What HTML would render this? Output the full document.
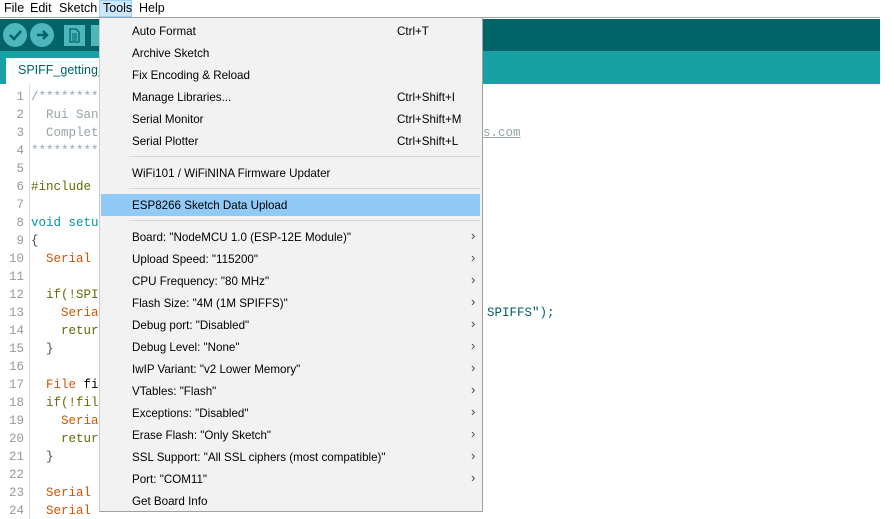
<!DOCTYPE html>
<html><head><style>
body{margin:0;width:894px;height:519px;background:#fff;position:relative;overflow:hidden;font-family:"Liberation Sans",sans-serif;}
.a{position:absolute;}
.mb{font-size:12.5px;color:#000;top:1px;}
.code{font-family:"Liberation Mono",monospace;font-size:12.5px;white-space:pre;}
.ln{position:absolute;left:0;width:24px;text-align:right;color:#999;font-family:"Liberation Mono",monospace;font-size:12.5px;}
.mi{position:absolute;left:132px;font-size:11.6px;color:#000;}
.sc{position:absolute;left:397px;font-size:11.6px;color:#000;}
.ar{position:absolute;left:471px;font-size:13px;color:#444;}
.sep{position:absolute;left:129px;width:351px;height:1px;background:#d7d7d7;}
</style></head><body>
<div class="a" style="left:0;top:17px;width:880px;height:1px;background:#a0a0a0"></div>
<div class="a mb" style="left:4px">File</div>
<div class="a mb" style="left:30px">Edit</div>
<div class="a mb" style="left:59px">Sketch</div>
<div class="a" style="left:99px;top:0;width:33px;height:17px;background:#cce8ff;border:1px solid #99d1ff;box-sizing:border-box"></div>
<div class="a mb" style="left:103px">Tools</div>
<div class="a mb" style="left:139px">Help</div>
<div class="a" style="left:0;top:19px;width:880px;height:32px;background:#006468"></div>
<div class="a" style="left:0;top:51px;width:880px;height:33px;background:#17a1a5"></div>
<div class="a" style="left:3px;top:23px;width:24px;height:24px;border-radius:50%;background:#4db7bb"></div>
<div class="a" style="left:30px;top:23px;width:24px;height:24px;border-radius:50%;background:#4db7bb"></div>
<svg class="a" style="left:3px;top:23px" width="52" height="24"><path d="M7 12 l4 4 l7 -8" stroke="#006468" stroke-width="2.5" fill="none"/><path d="M34 12 h10 M40 8 l4 4 l-4 4" stroke="#006468" stroke-width="2.5" fill="none"/></svg>
<div class="a" style="left:64px;top:25px;width:21px;height:21px;background:#4db7bb"></div>
<svg class="a" style="left:64px;top:25px" width="21" height="21"><path d="M6 4 h6 l3 3 v10 h-9 z" fill="none" stroke="#006468" stroke-width="1.3"/><path d="M8 9 h5 M8 11 h5 M8 13 h5 M8 15 h5" stroke="#006468" stroke-width="1"/></svg>
<div class="a" style="left:91px;top:25px;width:21px;height:21px;background:#4db7bb"></div>
<div class="a" style="left:6px;top:58px;width:100px;height:26px;background:#fff"></div>
<div class="a" style="left:18px;top:63px;font-size:12.5px;color:#006468">SPIFF_getting_</div>
<div class="a" style="left:29px;top:84px;width:1px;height:435px;background:#ddd"></div>
<div class="a" style="left:0;top:90px;width:120px">
<div style="position:relative">
<div class="ln" style="top:0">1</div><div class="code a" style="left:31px;top:0;color:#95a5a6">/*********</div>
<div class="ln" style="top:18px">2</div><div class="code a" style="left:31px;top:18px;color:#95a5a6">  Rui San</div>
<div class="ln" style="top:36px">3</div><div class="code a" style="left:31px;top:36px;color:#95a5a6">  Complet</div>
<div class="ln" style="top:54px">4</div><div class="code a" style="left:31px;top:54px;color:#95a5a6">*********</div>
<div class="ln" style="top:72px">5</div>
<div class="ln" style="top:90px">6</div><div class="code a" style="left:31px;top:90px;color:#5e6d03">#include</div>
<div class="ln" style="top:108px">7</div>
<div class="ln" style="top:126px">8</div><div class="code a" style="left:31px;top:126px;color:#00979c">void setu</div>
<div class="ln" style="top:144px">9</div><div class="code a" style="left:31px;top:144px;color:#434f54">{</div>
<div class="ln" style="top:162px">10</div><div class="code a" style="left:31px;top:162px;color:#d35400">  Serial</div>
<div class="ln" style="top:180px">11</div>
<div class="ln" style="top:198px">12</div><div class="code a" style="left:31px;top:198px;color:#5e6d03">  if(!SPI</div>
<div class="ln" style="top:216px">13</div><div class="code a" style="left:31px;top:216px;color:#d35400">    Seria</div>
<div class="ln" style="top:234px">14</div><div class="code a" style="left:31px;top:234px;color:#5e6d03">    retur</div>
<div class="ln" style="top:252px">15</div><div class="code a" style="left:31px;top:252px;color:#434f54">  }</div>
<div class="ln" style="top:270px">16</div>
<div class="ln" style="top:288px">17</div><div class="code a" style="left:31px;top:288px;color:#d35400">  File <span style="color:#000">fi</span></div>
<div class="ln" style="top:306px">18</div><div class="code a" style="left:31px;top:306px;color:#5e6d03">  if(!fil</div>
<div class="ln" style="top:324px">19</div><div class="code a" style="left:31px;top:324px;color:#d35400">    Seria</div>
<div class="ln" style="top:342px">20</div><div class="code a" style="left:31px;top:342px;color:#5e6d03">    retur</div>
<div class="ln" style="top:360px">21</div><div class="code a" style="left:31px;top:360px;color:#434f54">  }</div>
<div class="ln" style="top:378px">22</div>
<div class="ln" style="top:396px">23</div><div class="code a" style="left:31px;top:396px;color:#d35400">  Serial</div>
<div class="ln" style="top:414px">24</div><div class="code a" style="left:31px;top:414px;color:#d35400">  Serial</div>
</div></div>
<div class="code a" style="left:483px;top:126px;color:#95a5a6;text-decoration:underline">s.com</div>
<div class="code a" style="left:487px;top:306px;color:#005c5f">SPIFFS");</div>
<!-- menu -->
<div class="a" style="left:99px;top:18px;width:384px;height:494px;background:#f2f2f2;border-right:1px solid #a0a0a0;border-bottom:1px solid #a0a0a0;border-left:1px solid #ccc;box-sizing:border-box"></div>
<div class="a" style="left:101px;top:194px;width:379px;height:22px;background:#91c9f7"></div>
<div class="mi" style="top:25px">Auto Format</div><div class="sc" style="top:25px">Ctrl+T</div>
<div class="mi" style="top:47px">Archive Sketch</div>
<div class="mi" style="top:69px">Fix Encoding &amp; Reload</div>
<div class="mi" style="top:91px">Manage Libraries...</div><div class="sc" style="top:91px">Ctrl+Shift+I</div>
<div class="mi" style="top:113px">Serial Monitor</div><div class="sc" style="top:113px">Ctrl+Shift+M</div>
<div class="mi" style="top:135px">Serial Plotter</div><div class="sc" style="top:135px">Ctrl+Shift+L</div>
<div class="sep" style="top:156px"></div>
<div class="mi" style="top:167px">WiFi101 / WiFiNINA Firmware Updater</div>
<div class="sep" style="top:188px"></div>
<div class="mi" style="top:199px">ESP8266 Sketch Data Upload</div>
<div class="sep" style="top:220px"></div>
<div class="mi" style="top:231px">Board: "NodeMCU 1.0 (ESP-12E Module)"</div><div class="ar" style="top:228px">›</div>
<div class="mi" style="top:253px">Upload Speed: "115200"</div><div class="ar" style="top:250px">›</div>
<div class="mi" style="top:275px">CPU Frequency: "80 MHz"</div><div class="ar" style="top:272px">›</div>
<div class="mi" style="top:297px">Flash Size: "4M (1M SPIFFS)"</div><div class="ar" style="top:294px">›</div>
<div class="mi" style="top:319px">Debug port: "Disabled"</div><div class="ar" style="top:316px">›</div>
<div class="mi" style="top:341px">Debug Level: "None"</div><div class="ar" style="top:338px">›</div>
<div class="mi" style="top:363px">IwIP Variant: "v2 Lower Memory"</div><div class="ar" style="top:360px">›</div>
<div class="mi" style="top:385px">VTables: "Flash"</div><div class="ar" style="top:382px">›</div>
<div class="mi" style="top:407px">Exceptions: "Disabled"</div><div class="ar" style="top:404px">›</div>
<div class="mi" style="top:429px">Erase Flash: "Only Sketch"</div><div class="ar" style="top:426px">›</div>
<div class="mi" style="top:451px">SSL Support: "All SSL ciphers (most compatible)"</div><div class="ar" style="top:448px">›</div>
<div class="mi" style="top:473px">Port: "COM11"</div><div class="ar" style="top:470px">›</div>
<div class="mi" style="top:495px">Get Board Info</div>
</body></html>
